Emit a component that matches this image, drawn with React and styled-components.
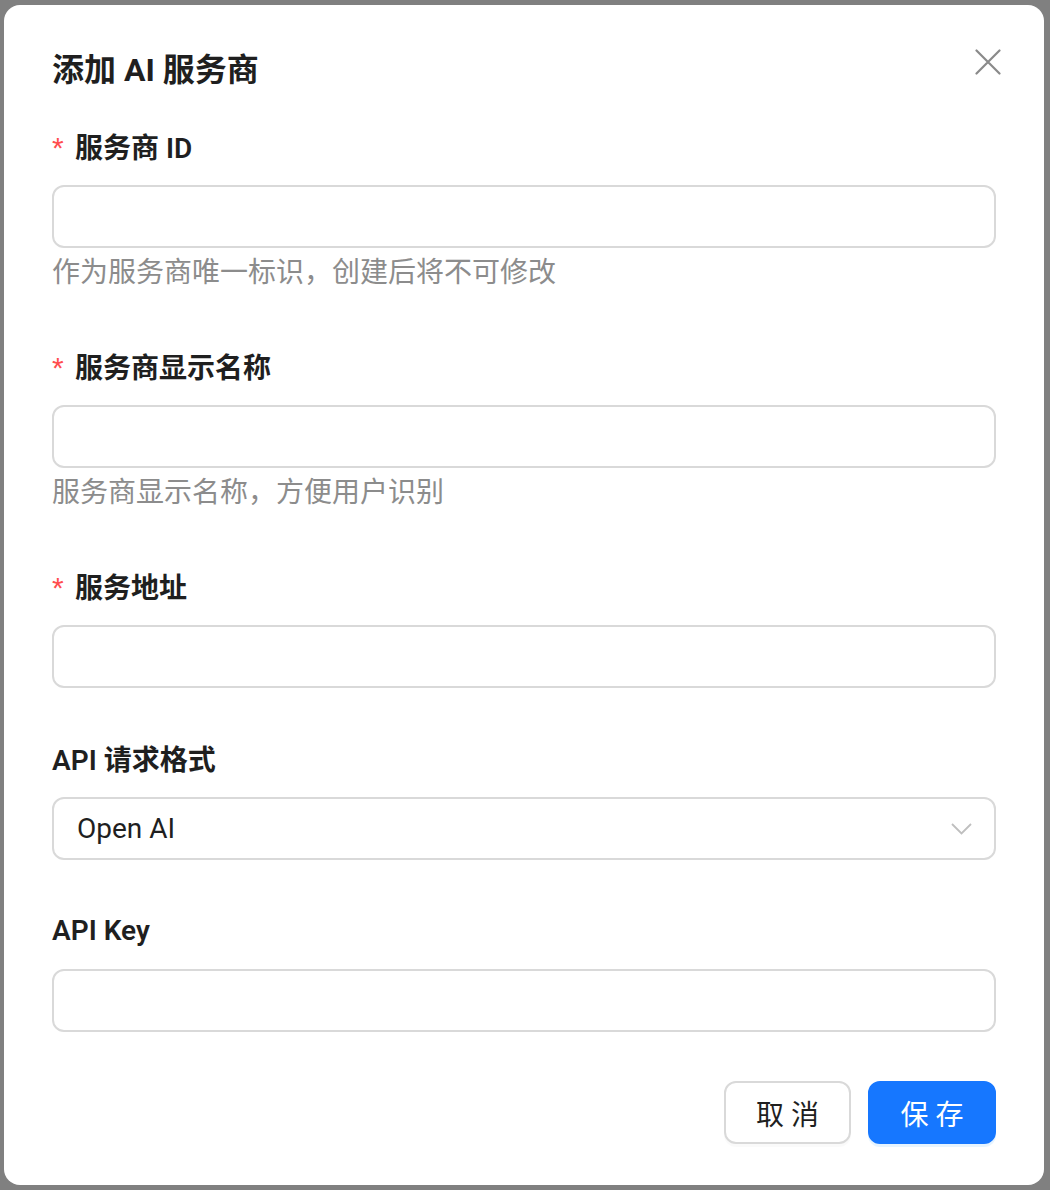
import React from "react";
import styled, { createGlobalStyle } from "styled-components";

const GlobalStyle = createGlobalStyle`
  html, body {
    margin: 0;
    padding: 0;
    background: #808080;
  }
  body {
    font-family: Roboto, "Noto Sans CJK SC", sans-serif;
    color: #1f1f1f;
  }
  * {
    box-sizing: border-box;
  }
`;

const Backdrop = styled.div`
  width: 1050px;
  height: 1190px;
  padding: 5px 6px 5px 4px;
  background: #808080;
`;

const Modal = styled.div`
  width: 1040px;
  height: 1180px;
  background: #ffffff;
  border-radius: 16px;
  padding: 45px 48px 41px;
  display: flex;
  flex-direction: column;
`;

const Header = styled.div`
  display: flex;
  justify-content: space-between;
  align-items: flex-start;
  margin-bottom: 38px;
`;

const Title = styled.h2`
  margin: 0;
  font-size: 32px;
  line-height: 40px;
  font-weight: 700;
  color: #1f1f1f;
`;

const CloseButton = styled.button`
  width: 26px;
  height: 26px;
  margin: -1px -5px 0 0;
  padding: 0;
  border: none;
  background: none;
  display: flex;
  align-items: center;
  justify-content: center;
  cursor: pointer;
`;

const Field = styled.div`
  display: flex;
  flex-direction: column;
  margin-bottom: ${(p) => (p.$last ? "0" : "52px")};
`;

const Label = styled.label`
  display: flex;
  align-items: center;
  height: 40px;
  padding-bottom: 4px;
  margin-bottom: 17px;
  font-size: 28px;
  font-weight: 600;
  color: #1f1f1f;
`;

const Required = styled.span`
  color: #ff4d4f;
  font-size: 30px;
  font-weight: 400;
  width: 23px;
  margin-top: 4px;
  font-family: "Liberation Sans", sans-serif;
`;

const Input = styled.input`
  height: 63px;
  width: 100%;
  border: 2px solid #d9d9d9;
  border-radius: 12px;
  padding: 0 22px;
  font-size: 28px;
  font-family: inherit;
  color: #1f1f1f;
  outline: none;
  background: #fff;
`;

const Select = styled.div`
  height: 63px;
  border: 2px solid #d9d9d9;
  border-radius: 12px;
  padding: 0 22px 0 23px;
  display: flex;
  align-items: center;
  justify-content: space-between;
  font-size: 28px;
  color: #1f1f1f;
`;

const Help = styled.div`
  height: 48px;
  line-height: 50px;
  font-size: 28px;
  color: #8c8c8c;
`;

const Footer = styled.div`
  margin-top: 49px;
  display: flex;
  justify-content: flex-end;
  gap: 17px;
`;

const Button = styled.button`
  height: 63px;
  min-width: ${(p) => (p.$primary ? "128px" : "126px")};
  border-radius: 12px;
  font-family: inherit;
  font-size: 28px;
  padding: 0 30px;
  cursor: pointer;
  border: 2px solid ${(p) => (p.$primary ? "#1677ff" : "#d9d9d9")};
  background: ${(p) => (p.$primary ? "#1677ff" : "#ffffff")};
  color: ${(p) => (p.$primary ? "#ffffff" : "#1f1f1f")};
  box-shadow: ${(p) =>
    p.$primary ? "0 3px 0 rgba(5, 145, 255, 0.1)" : "0 3px 0 rgba(0, 0, 0, 0.02)"};
`;

const fields = [
  { id: "id", label: "服务商 ID", required: true, help: "作为服务商唯一标识，创建后将不可修改" },
  { id: "name", label: "服务商显示名称", required: true, help: "服务商显示名称，方便用户识别" },
  { id: "url", label: "服务地址", required: true },
];

const CloseIcon = () => (
  <svg width="26" height="26" viewBox="0 0 26 26">
    <path d="M1.5 1.5 L24.5 24.5 M24.5 1.5 L1.5 24.5" stroke="#8a8a8a" strokeWidth="2.2" strokeLinecap="round" />
  </svg>
);

const Chevron = () => (
  <svg width="21" height="12" viewBox="0 0 21 12">
    <polyline points="1,1 10.5,10.5 20,1" fill="none" stroke="#bfbfbf" strokeWidth="1.8" />
  </svg>
);

export default function App() {
  return (
    <>
      <GlobalStyle />
      <Backdrop>
        <Modal>
          <Header>
            <Title>添加 AI 服务商</Title>
            <CloseButton aria-label="关闭">
              <CloseIcon />
            </CloseButton>
          </Header>

          {fields.map((f) => (
            <Field key={f.id}>
              <Label>
                {f.required && <Required>*</Required>}
                {f.label}
              </Label>
              <Input />
              {f.help && <Help>{f.help}</Help>}
            </Field>
          ))}

          <Field>
            <Label>API 请求格式</Label>
            <Select>
              <span>Open AI</span>
              <Chevron />
            </Select>
          </Field>

          <Field $last>
            <Label>API Key</Label>
            <Input />
          </Field>

          <Footer>
            <Button>取 消</Button>
            <Button $primary>保 存</Button>
          </Footer>
        </Modal>
      </Backdrop>
    </>
  );
}
